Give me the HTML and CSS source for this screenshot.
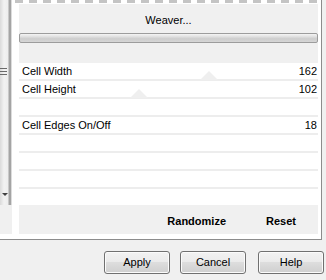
FILE: index.html
```html
<!DOCTYPE html>
<html>
<head>
<meta charset="utf-8">
<link rel="stylesheet" href="styles.css">
</head>
<body>
<div class="frame">
  <div class="leftcol">
    <div class="scrollbar">
      <div class="grip"><i></i><i></i><i></i></div>
      <div class="arrow"></div>
    </div>
    <div class="leftfill"></div>
  </div>
  <div class="dash"></div>
  <div class="gutter"></div>
  <div class="main">
    <div class="header">
      <div class="title">Weaver...</div>
      <div class="bar"></div>
    </div>
    <div class="rows">
      <div class="row"><span>Cell Width</span><span>162</span></div>
      <div class="row"><span>Cell Height</span><span>102</span></div>
      <div class="row"></div>
      <div class="row"><span>Cell Edges On/Off</span><span>18</span></div>
      <div class="row"></div>
      <div class="row"></div>
      <div class="row"></div>
      <div class="ghost g1"></div>
      <div class="ghost g2"></div>
    </div>
    <div class="spacer"></div>
    <div class="actions"><span class="rand">Randomize</span><span>Reset</span></div>
    <div class="bottomwhite"></div>
  </div>
  <div class="rightpad"></div>
</div>
<div class="buttons">
  <div class="btn">Apply</div>
  <div class="btn">Cancel</div>
  <div class="btn help">Help</div>
</div>
</body>
</html>
```
FILE: styles.css
```css
html, body {
  margin: 0;
  padding: 0;
}
body {
  width: 326px;
  height: 280px;
  background: #f0f0f0;
  font-family: "Liberation Sans", Arial, sans-serif;
  font-size: 11px;
  color: #000;
  overflow: hidden;
}
.frame {
  width: 322px;
  height: 240px;
  box-sizing: border-box;
  border-right: 1px solid #8c8c8c;
  border-bottom: 1px solid #8c8c8c;
  background: #fff;
  display: grid;
  grid-template-columns: 12px 7px 299px 3px;
  grid-template-rows: 4px 235px;
}
.leftcol {
  grid-column: 1;
  grid-row: 1 / 3;
  display: flex;
  flex-direction: column;
}
.scrollbar {
  height: 205px;
  position: relative;
  background: linear-gradient(to right, #dadada 0, #e6e6e6 2px, #f2f2f2 4px, #ededed 8px, #a4a4a4 9px, #a4a4a4 11px, #dcdcdc 11px, #dcdcdc 12px);
}
.grip {
  position: absolute;
  left: 0;
  top: 68px;
  width: 7px;
  display: flex;
  flex-direction: column;
  gap: 2px;
}
.grip i {
  display: block;
  height: 1px;
  background: #6a6a6a;
}
.arrow {
  position: absolute;
  left: 2px;
  top: 193px;
  width: 0;
  height: 0;
  border-left: 3px solid transparent;
  border-right: 3px solid transparent;
  border-top: 3px solid #404040;
}
.leftfill {
  height: 29px;
  background: #f0f0f0;
}
.dash {
  grid-column: 2 / 5;
  grid-row: 1;
  background: repeating-linear-gradient(to right, #fff 0, #fff 3px, #c4c4c4 3px, #c4c4c4 11px, #fff 11px, #fff 14px);
  background-size: 100% 3px;
  background-repeat: no-repeat;
}
.gutter {
  grid-column: 2;
  grid-row: 2;
  background: #fff;
}
.main {
  grid-column: 3;
  grid-row: 2;
  display: flex;
  flex-direction: column;
}
.rightpad {
  grid-column: 4;
  grid-row: 2;
  background: #fff;
}
.header {
  height: 59px;
  background: #f0f0f0;
  box-sizing: border-box;
  padding-top: 9px;
}
.title {
  text-align: center;
  line-height: 14px;
  height: 14px;
}
.bar {
  margin-top: 6px;
  height: 10px;
  box-sizing: border-box;
  border: 1px solid #9c9c9c;
  border-radius: 2px;
  background: linear-gradient(#f4f4f4 0, #e2e2e2 30%, #cdcdcd 60%, #d6d6d6 100%);
}
.rows {
  position: relative;
}
.row {
  height: 18px;
  box-sizing: border-box;
  border-bottom: 2px solid #ededed;
  display: flex;
  justify-content: space-between;
  padding: 0 1px 0 3px;
  line-height: 17px;
  background: #fff;
}
.ghost {
  position: absolute;
  width: 0;
  height: 0;
  border-left: 9px solid transparent;
  border-right: 9px solid transparent;
  border-bottom: 9px solid #efefef;
}
.g1 { left: 111px; top: 26px; }
.g2 { left: 181px; top: 8px; }
.spacer {
  height: 16px;
  background: #fff;
}
.actions {
  height: 29px;
  background: #f0f0f0;
  display: flex;
  justify-content: flex-end;
  align-items: center;
  padding-right: 22px;
  gap: 40px;
  font-weight: bold;
  padding-top: 2px;
  box-sizing: border-box;
}
.bottomwhite {
  height: 5px;
  background: #fff;
}
.buttons {
  display: flex;
  padding: 11px 0 0 104px;
  gap: 10px;
}
.btn {
  width: 66px;
  height: 23px;
  box-sizing: border-box;
  border: 1px solid #707070;
  border-radius: 3px;
  background: linear-gradient(#f2f2f2 0, #ebebeb 45%, #dddddd 50%, #cfcfcf 100%);
  box-shadow: inset 0 0 0 1px #fbfbfb;
  text-align: center;
  line-height: 21px;
}
.help {
  margin-left: 2px;
}
```
